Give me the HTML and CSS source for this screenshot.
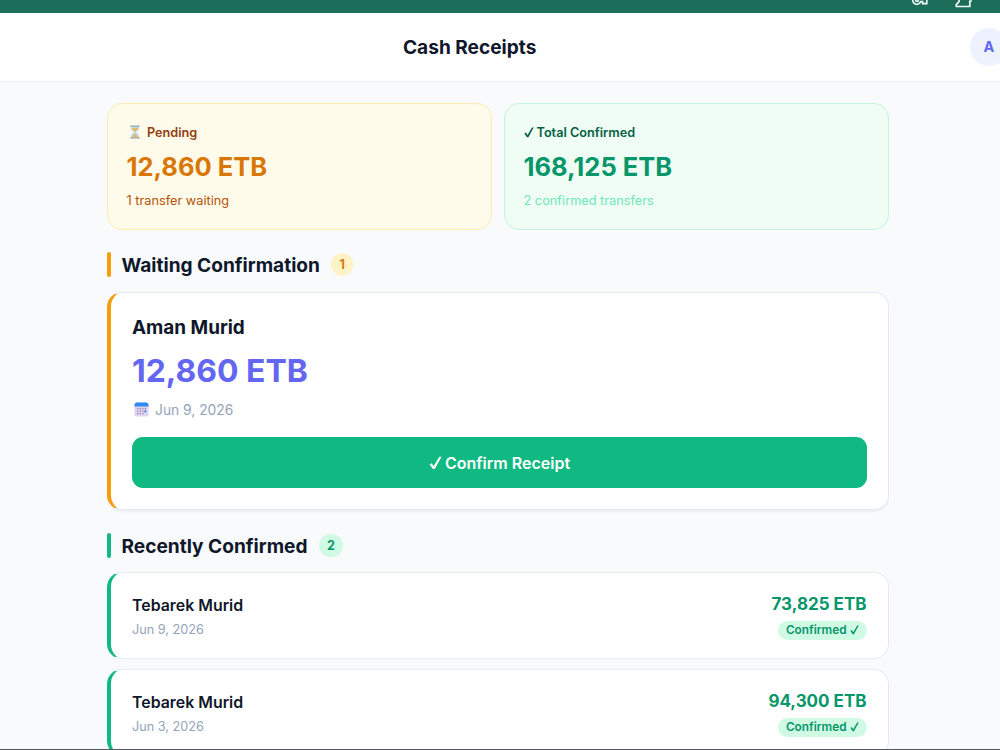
FILE: index.html
```
<!DOCTYPE html>
<html lang="en">
<head>
    <meta charset="UTF-8">
    <meta name="viewport" content="width=device-width, initial-scale=1.0">
    <title>Cash Receipts</title>
    <link rel="stylesheet" href="styles.css">
</head>
<body>

    <svg width="0" height="0" class="symbols">
        <symbol id="check" viewBox="0 0 10 11">
            <path d="M.4 6.4L1.9 5.6L3.6 7.9L8 .6H9.7L4.4 10.2H2.9Z" fill="currentColor"/>
        </symbol>
    </svg>

    <div class="top-strip">
        <svg class="key-icon" width="18" height="10" viewBox="0 0 18 10" fill="none" stroke="#f2faf7" stroke-width="1.6">
            <path d="M1 -1A4 4 0 0 0 8.6 1.6H10.6V3.6H14.8V-1"/>
            <circle cx="5" cy="0.1" r="1.4"/>
        </svg>
        <svg class="tray-icon" width="18" height="10" viewBox="0 0 18 10" fill="none" stroke="#f2faf7" stroke-width="1.7" stroke-linejoin="round">
            <path d="M4 -2V1.6L1.3 4.6V6.5H14.8V1H17"/>
        </svg>
    </div>

    <header class="header">
        <h1>Cash Receipts</h1>
        <div class="avatar">A</div>
    </header>

    <main class="content">
        <div class="summary">
            <div class="summary-card pending">
                <div class="summary-label">
                    <svg class="hourglass" width="12" height="14" viewBox="0 0 12 14">
                        <path d="M2 1.5H10V3.5C10 5.5 7.2 6 7.2 7S10 8.7 10 11V12.5H2V11C2 8.7 4.8 8 4.8 7S2 5.5 2 3.5Z" fill="#b9dcf2"/>
                        <path d="M3 3.2H9C9 5 6.6 5.5 6 6.8C5.4 5.5 3 5 3 3.2ZM6 8.5L9 12H3Z" fill="#f0b64a"/>
                        <path d="M1.2 .6H10.8V1.8H1.2ZM1.2 12.2H10.8V13.4H1.2Z" fill="#9aa3a8"/>
                    </svg>
                    <span>Pending</span>
                </div>
                <div class="summary-amount">12,860 ETB</div>
                <div class="summary-note">1 transfer waiting</div>
            </div>
            <div class="summary-card confirmed">
                <div class="summary-label">
                    <svg class="check"><use href="#check"/></svg>
                    <span>Total Confirmed</span>
                </div>
                <div class="summary-amount">168,125 ETB</div>
                <div class="summary-note">2 confirmed transfers</div>
            </div>
        </div>

        <div class="section-title waiting">
            <h2>Waiting Confirmation</h2>
            <span class="count">1</span>
        </div>

        <div class="receipt">
            <div class="receipt-name">Aman Murid</div>
            <div class="receipt-amount">12,860 ETB</div>
            <div class="receipt-date">
                <svg width="15" height="15" viewBox="0 0 15 15">
                    <rect x=".5" y=".5" width="14" height="14" rx="2.5" fill="#dfd3f0"/>
                    <path d="M.5 4.5V3A2.5 2.5 0 0 1 3 .5H12A2.5 2.5 0 0 1 14.5 3V4.5Z" fill="#2e8bf0"/>
                    <path d="M3.2 6.7H12M3.2 9.2H12M3.2 11.7H9.5" stroke="#9484ac" stroke-width="1.3" stroke-dasharray="1.3 1.2"/>
                    <rect x="10.4" y="8.4" width="1.8" height="1.8" fill="#2e8bf0"/>
                </svg>
                <span>Jun 9, 2026</span>
            </div>
            <button class="confirm-button">
                <svg class="check"><use href="#check"/></svg>
                <span>Confirm Receipt</span>
            </button>
        </div>

        <div class="section-title done">
            <h2>Recently Confirmed</h2>
            <span class="count">2</span>
        </div>

        <div class="history">
            <div class="history-card">
                <div class="history-left">
                    <div class="history-name">Tebarek Murid</div>
                    <div class="history-date">Jun 9, 2026</div>
                </div>
                <div class="history-right">
                    <div class="history-amount">73,825 ETB</div>
                    <div class="status">
                        <span>Confirmed</span>
                        <svg class="check"><use href="#check"/></svg>
                    </div>
                </div>
            </div>
            <div class="history-card">
                <div class="history-left">
                    <div class="history-name">Tebarek Murid</div>
                    <div class="history-date">Jun 3, 2026</div>
                </div>
                <div class="history-right">
                    <div class="history-amount">94,300 ETB</div>
                    <div class="status">
                        <span>Confirmed</span>
                        <svg class="check"><use href="#check"/></svg>
                    </div>
                </div>
            </div>
        </div>
    </main>

</body>
</html>
```

FILE: styles.css
```
* {
    box-sizing: border-box;
}
body {
    margin: 0;
    height: 750px;
    overflow: hidden;
    border-bottom: 1px solid #55585c;
    font-family: Inter, sans-serif;
    background-color: #f8fafc;
    color: #0f172a;
    display: flex;
    flex-direction: column;
}
h1, h2 {
    margin: 0;
}
.symbols {
    display: none;
}
.check {
    width: 10px;
    height: 11px;
}

/* Header */
.top-strip {
    flex: none;
    display: flex;
    justify-content: flex-end;
    gap: 25px;
    height: 13px;
    padding-right: 27px;
    background-color: #1d6d5b;
}
.header {
    flex: none;
    display: flex;
    align-items: center;
    justify-content: space-between;
    height: 69px;
    padding-left: 403px;
    background-color: #fff;
    border-bottom: 1px solid #e9eef4;
}
.header h1 {
    font-size: 19.1px;
    font-weight: 700;
}
.avatar {
    width: 38px;
    height: 38px;
    margin-right: -8px;
    border-radius: 50%;
    background-color: #eef2ff;
    color: #6366f1;
    font-size: 14.5px;
    font-weight: 700;
    line-height: 38px;
    text-align: center;
}

/* Summary cards */
.content {
    flex: 1;
    min-height: 0;
    overflow: hidden;
    width: 782px;
    margin-left: 107px;
    padding-top: 21px;
}
.summary {
    display: grid;
    grid-template-columns: 1fr 1fr;
    gap: 12px;
}
.summary-card {
    height: 127px;
    padding: 18px 18.5px;
    border: 1px solid;
    border-radius: 15px;
}
.summary-label {
    display: flex;
    align-items: center;
    height: 20px;
    font-size: 12.7px;
    font-weight: 600;
}
.summary-label .check {
    margin-right: 3px;
}
.hourglass {
    margin: 0 6.5px 0 2px;
}
.summary-amount {
    height: 50px;
    line-height: 50px;
    font-size: 25.5px;
    font-weight: 700;
}
.summary-note {
    line-height: 17px;
    font-size: 12.75px;
}
.pending {
    background-color: #fffbeb;
    border-color: #fdecb0;
    color: #92400e;
}
.pending .summary-amount {
    color: #d97706;
}
.pending .summary-note {
    color: #b45309;
}
.confirmed {
    background-color: #f0fdf4;
    border-color: #c3f5da;
    color: #065f46;
}
.confirmed .summary-amount {
    color: #059669;
}
.confirmed .summary-note {
    color: #6ee7b7;
}

/* Section titles */
.section-title {
    display: flex;
    align-items: center;
    height: 25px;
    margin: 22px 0 15px;
}
.section-title::before {
    content: "";
    width: 4px;
    height: 25px;
    margin-right: 10.5px;
    border-radius: 2px;
    background-color: #f59e0b;
}
.section-title h2 {
    font-size: 19.1px;
    font-weight: 700;
}
.count {
    margin-left: 11px;
    padding: 0 8.5px;
    border-radius: 12px;
    background-color: #fef3c7;
    color: #d97706;
    font-size: 12.6px;
    font-weight: 700;
    line-height: 23px;
}
.done {
    margin: 23px 0 14px;
}
.done::before {
    background-color: #10b981;
}
.done .count {
    background-color: #d1fae5;
    color: #059669;
}

/* Receipt waiting for confirmation */
.receipt {
    height: 218px;
    padding: 20px 21px 0;
    border: 1px solid #e6ebf2;
    border-left: 4px solid #f59e0b;
    border-radius: 15px;
    background-color: #fff;
    box-shadow: 0 1px 3px rgba(15, 23, 42, 0.08);
}
.receipt-name {
    line-height: 30px;
    font-size: 18.9px;
    font-weight: 700;
}
.receipt-amount {
    line-height: 56px;
    font-size: 31.9px;
    font-weight: 700;
    color: #6366f1;
}
.receipt-date {
    display: flex;
    align-items: center;
    gap: 6px;
    height: 21px;
    padding-left: 2px;
    font-size: 13.8px;
    color: #94a3b8;
}
.confirm-button {
    display: flex;
    align-items: center;
    justify-content: center;
    gap: 3px;
    width: 100%;
    height: 51px;
    margin-top: 17px;
    border: none;
    border-radius: 11px;
    background-color: #10b981;
    color: #fff;
    font-family: inherit;
    font-size: 16px;
    font-weight: 600;
    cursor: pointer;
}
.confirm-button .check {
    width: 13px;
    height: 14px;
}

/* Confirmed receipts */
.history {
    display: grid;
    gap: 10px;
}
.history-card {
    display: flex;
    align-items: center;
    justify-content: space-between;
    height: 87px;
    padding: 0 21.5px 0 21px;
    border: 1px solid #e6ebf2;
    border-left: 4px solid #10b981;
    border-radius: 15px;
    background-color: #fff;
}
.history-left {
    padding-top: 2px;
}
.history-name {
    line-height: 26px;
    font-size: 15.9px;
    font-weight: 600;
}
.history-date {
    line-height: 22px;
    font-size: 12.7px;
    color: #94a3b8;
}
.history-right {
    display: flex;
    flex-direction: column;
    align-items: flex-end;
    padding-bottom: 3px;
}
.history-amount {
    line-height: 31px;
    font-size: 17px;
    font-weight: 700;
    color: #059669;
}
.status {
    display: flex;
    align-items: center;
    gap: 3px;
    margin-top: 1px;
    padding: 0 8px;
    border-radius: 10px;
    background-color: #d1fae5;
    color: #059669;
    font-size: 11.8px;
    font-weight: 600;
    line-height: 19px;
}
.status .check {
    width: 9px;
    height: 10px;
}
```
